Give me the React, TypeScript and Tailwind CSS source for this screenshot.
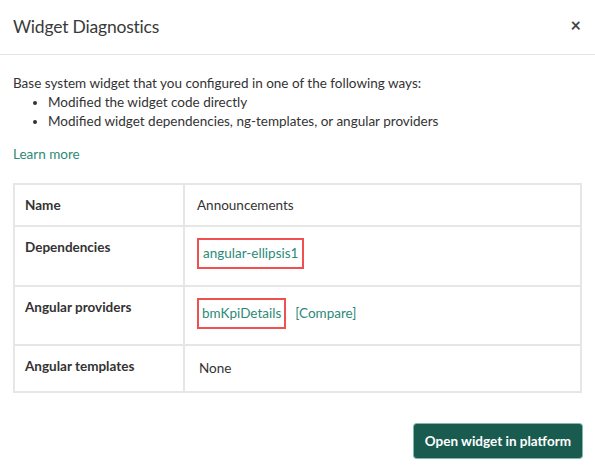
import React from 'react';

const rows = [
  { label: 'Name', kind: 'text', value: 'Announcements' },
  { label: 'Dependencies', kind: 'dep', value: 'angular-ellipsis1' },
  { label: 'Angular providers', kind: 'prov', value: 'bmKpiDetails' },
  { label: 'Angular templates', kind: 'text', value: 'None' },
];

const App: React.FC = () => {
  return (
    <div className="w-[595px] h-[470px] bg-white font-['Lato',sans-serif] text-[#333] overflow-hidden">
      {/* Header */}
      <div className="h-[55px] flex items-center justify-between pl-[13px] pr-[14px] border-b border-[#e3e3e3]">
        <h2 className="text-[17.5px] text-[#3a3a3a] tracking-[-0.2px] pt-[1px]">Widget Diagnostics</h2>
        <button className="text-[#444] text-[18px] font-bold leading-none -mt-[4px]">×</button>
      </div>

      {/* Body */}
      <div className="px-[13px] pt-[19px]">
        <p className="text-[13.5px] leading-[19px] text-[#333]">
          Base system widget that you configured in one of the following ways:
        </p>
        <ul className="list-disc pl-[35px] text-[13.5px] leading-[19px] text-[#333] marker:text-[#333]">
          <li>Modified the widget code directly</li>
          <li>Modified widget dependencies, ng-templates, or angular providers</li>
        </ul>
        <a className="block mt-[13px] text-[13.5px] text-[#2d8a78]">Learn more</a>

        <div className="mt-[19px] w-[569px] border-2 border-[#e6e6e6]">
          {rows.map((r, i) => (
            <div
              key={r.label}
              className={
                'grid grid-cols-[170px_1fr] ' +
                (i > 0 ? 'border-t-2 border-[#e6e6e6] ' : '') +
                (i === 0 ? 'h-[40px]' : i === 1 ? 'h-[60px]' : i === 2 ? 'h-[59px]' : 'h-[47px]')
              }
            >
              <div className="border-r-2 border-[#e6e6e6] pl-[10px] pt-[10px] text-[13.5px] font-bold text-[#333]">
                {r.label}
              </div>
              <div className="pl-[12px] text-[13.5px]">
                {r.kind === 'text' && <div className={i === 0 ? 'pt-[10px]' : 'pt-[12px] pl-[2px]'}>{r.value}</div>}
                {r.kind === 'dep' && (
                  <div className="pt-[11px]">
                    <span className="inline-block border-[2px] border-[#f0504f] px-[4px] py-[3px] text-[#2d8a78]">{r.value}</span>
                  </div>
                )}
                {r.kind === 'prov' && (
                  <div className="pt-[11px] flex items-center gap-[9px]">
                    <span className="inline-block border-[2px] border-[#f0504f] px-[3px] py-[3px] text-[#2d8a78]">{r.value}</span>
                    <span className="text-[#2d8a78]">[Compare]</span>
                  </div>
                )}
              </div>
            </div>
          ))}
        </div>

        <div className="flex justify-end mt-[31px]">
          <button className="h-[34px] px-[11px] rounded-[3px] bg-[#1a5b50] text-white font-bold text-[13.5px] shadow-[0_0_0_1px_#7fb8ad]">
            Open widget in platform
          </button>
        </div>
      </div>
    </div>
  );
};

export default App;
